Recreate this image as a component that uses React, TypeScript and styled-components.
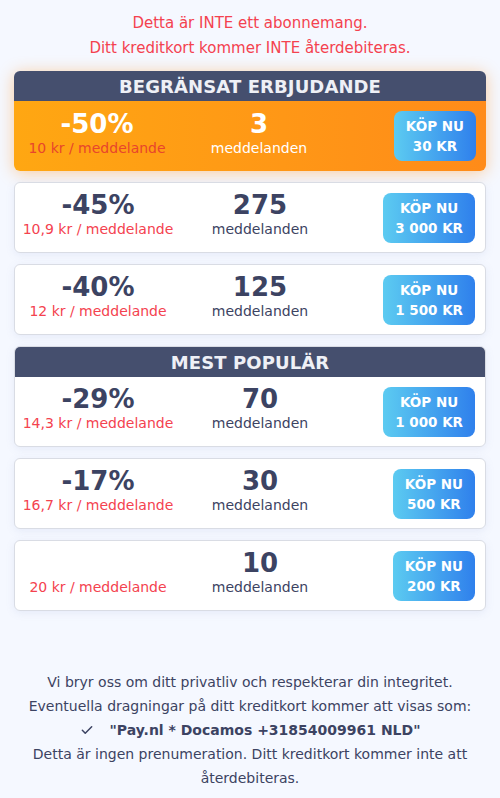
import React from "react";
import styled, { createGlobalStyle, css } from "styled-components";

const Global = createGlobalStyle`
  html, body { margin: 0; padding: 0; background: #f5f8ff; }
  body { font-family: "DejaVu Sans", Verdana, sans-serif; }
`;

const Page = styled.div`
  width: 500px;
  box-sizing: border-box;
  padding: 11px 14px 10px 14px;
  display: flex;
  flex-direction: column;
`;

const Notice = styled.div`
  color: #f4424f;
  font-size: 15px;
  line-height: 25px;
  text-align: center;
  margin-bottom: 10px;
`;

const List = styled.div`
  display: flex;
  flex-direction: column;
  gap: 11px;
`;

const Card = styled.div<{ $hot?: boolean }>`
  border-radius: 6px;
  overflow: hidden;
  background: #fff;
  border: 1px solid #d9dce4;
  box-shadow: 0 2px 8px rgba(120, 140, 200, 0.12);
  ${(p) =>
    p.$hot &&
    css`
      border: none;
      box-shadow: 0 2px 16px rgba(255, 150, 40, 0.45);
    `}
`;

const Header = styled.div`
  height: 30px;
  background: #454f6e;
  color: #eef0f6;
  font-weight: bold;
  font-size: 18px;
  letter-spacing: 0.1px;
  display: flex;
  align-items: center;
  justify-content: center;
`;

const Body = styled.div<{ $hot?: boolean }>`
  height: 69px;
  display: flex;
  align-items: center;
  ${(p) =>
    p.$hot &&
    css`
      height: 70px;
      background: linear-gradient(90deg, #ffa712 0%, #ff8b19 100%);
    `}
`;

const Col = styled.div<{ $w: number }>`
  width: ${(p) => p.$w}px;
  flex: none;
  display: flex;
  flex-direction: column;
  align-items: center;
  margin-bottom: 7px;
`;

const Big = styled.div<{ $hot?: boolean }>`
  font-weight: bold;
  font-size: 26px;
  line-height: 30px;
  height: 30px;
  color: ${(p) => (p.$hot ? "#ffffff" : "#3c4362")};
`;

const Small = styled.div<{ $color: string }>`
  font-size: 14px;
  line-height: 18px;
  color: ${(p) => p.$color};
  white-space: nowrap;
`;

const Spacer = styled.div`
  flex: 1;
`;

const Buy = styled.button`
  margin-right: 10px;
  border: none;
  border-radius: 8px;
  padding: 0 12px;
  height: 50px;
  min-width: 81px;
  background: linear-gradient(90deg, #5ccbf1 0%, #2f80ec 100%);
  color: #fff;
  font-family: "DejaVu Sans", Verdana, sans-serif;
  font-weight: bold;
  font-size: 13.5px;
  line-height: 20px;
  text-align: center;
  cursor: pointer;
`;

const Footer = styled.div`
  margin-top: 59px;
  text-align: center;
  color: #3c4362;
  font-size: 14px;
  line-height: 24px;
  padding: 0 6px;
`;

const Descriptor = styled.div`
  font-weight: bold;
  display: flex;
  justify-content: center;
  align-items: center;
  gap: 16px;
`;

type Offer = {
  pct?: string;
  per: string;
  count: string;
  price: string;
  label?: string;
  hot?: boolean;
};

const offers: Offer[] = [
  { pct: "-50%", per: "10 kr / meddelande", count: "3", price: "30 KR", label: "BEGRÄNSAT ERBJUDANDE", hot: true },
  { pct: "-45%", per: "10,9 kr / meddelande", count: "275", price: "3 000 KR" },
  { pct: "-40%", per: "12 kr / meddelande", count: "125", price: "1 500 KR" },
  { pct: "-29%", per: "14,3 kr / meddelande", count: "70", price: "1 000 KR", label: "MEST POPULÄR" },
  { pct: "-17%", per: "16,7 kr / meddelande", count: "30", price: "500 KR" },
  { per: "20 kr / meddelande", count: "10", price: "200 KR" },
];

const Check = () => (
  <svg width="14" height="14" viewBox="0 0 24 24" fill="none" stroke="#3c4362" strokeWidth="2.6" strokeLinecap="round" strokeLinejoin="round">
    <path d="M4 12.5l5 5L20 6.5" />
  </svg>
);

export default function App() {
  return (
    <>
      <Global />
      <Page>
        <Notice>
          Detta är INTE ett abonnemang.
          <br />
          Ditt kreditkort kommer INTE återdebiteras.
        </Notice>
        <List>
          {offers.map((o, i) => (
            <Card key={i} $hot={o.hot}>
              {o.label && <Header>{o.label}</Header>}
              <Body $hot={o.hot}>
                <Col $w={166}>
                  <Big $hot={o.hot}>{o.pct ?? ""}</Big>
                  <Small $color={o.hot ? "#e8452c" : "#f4424f"}>{o.per}</Small>
                </Col>
                <Col $w={158}>
                  <Big $hot={o.hot}>{o.count}</Big>
                  <Small $color={o.hot ? "#ffffff" : "#3c4362"}>meddelanden</Small>
                </Col>
                <Spacer />
                <Buy>
                  KÖP NU
                  <br />
                  {o.price}
                </Buy>
              </Body>
            </Card>
          ))}
        </List>
        <Footer>
          Vi bryr oss om ditt privatliv och respekterar din integritet.
          <br />
          Eventuella dragningar på ditt kreditkort kommer att visas som:
          <Descriptor>
            <Check />
            <span>"Pay.nl * Docamos +31854009961 NLD"</span>
          </Descriptor>
          Detta är ingen prenumeration. Ditt kreditkort kommer inte att återdebiteras.
        </Footer>
      </Page>
    </>
  );
}
